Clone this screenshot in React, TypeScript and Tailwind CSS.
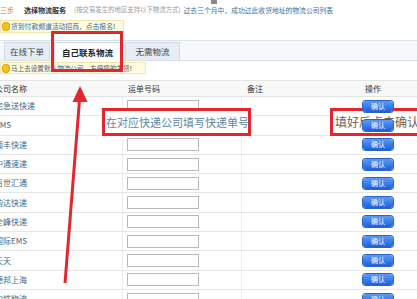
import React from "react"

const rows = [
  "宅急送快递",
  "EMS",
  "顺丰快递",
  "中通速递",
  "百世汇通",
  "韵达快递",
  "全峰快递",
  "国际EMS",
  "天天",
  "德邦上海",
  "中铁物流",
]

function Bulb() {
  return (
    <span className="mx-[2px] inline-block h-[7px] w-[6px] shrink-0 rounded-full bg-[#f4c21c] ring-1 ring-[#e3a400]" />
  )
}

function ConfirmButton() {
  return (
    <button className="relative z-20 flex h-[11px] w-[30px] items-center justify-center rounded-[3px] bg-gradient-to-b from-[#5b9bf5] to-[#1c5fd9] text-[7px] leading-none text-white shadow-[0_0_0_1px_#2a64c8]">
      确认
    </button>
  )
}

export default function App() {
  return (
    <div
      className="relative h-[299px] w-[417px] overflow-hidden bg-white"
      style={{ fontFamily: '"Noto Sans CJK SC", "Noto Sans", sans-serif' }}
    >
      {/* step title */}
      <div className="flex h-[20px] items-center whitespace-nowrap text-[7px] leading-none">
        <span className="-ml-[7px] text-[#e0782a]">第三步</span>
        <span className="ml-[10px] font-bold text-[#333]">选择物流服务</span>
        <span className="ml-[8px] text-[6.4px] text-[#9a9a9a]">(按交易发生的地区支持以下物流方式)</span>
        <span className="ml-[3px] text-[6.8px] text-[#3b6f9a]">过去三个月中，成功过此收货地址的物流公司列表</span>
      </div>
      <div className="absolute left-[211px] top-0 h-[4px] w-[6px] bg-[#8a8a8a]" />

      {/* notice 1 */}
      <div className="flex h-[13px] w-[124px] items-center whitespace-nowrap border border-[#f1e4ad] bg-[#fffbe0] text-[6.8px] leading-none">
        <Bulb />
        <span className="text-[#2f6fae]">货到付款频道活动招商，点击报名</span>
        <span className="text-[#333]">!</span>
      </div>

      {/* tabs */}
      <div className="mt-[7px] flex h-[21px] items-end gap-[4px] border-y border-[#d9e0e8] bg-[#f6f8fb] pl-[4px]">
        <div className="flex h-[18px] w-[46px] items-center justify-center border border-b-0 border-[#cfd8e3] bg-[#e7edf4] text-[8.5px] text-[#444]">
          在线下单
        </div>
        <div className="-mb-px flex h-[19px] w-[67px] items-center justify-center border border-b-0 border-[#cfd8e3] bg-white text-[8.5px] font-bold text-[#222]">
          自己联系物流
        </div>
        <div className="flex h-[18px] w-[55px] items-center justify-center border border-b-0 border-[#cfd8e3] bg-[#e7edf4] text-[8.5px] text-[#444]">
          无需物流
        </div>
      </div>

      {/* notice 2 */}
      <div className="mt-[1px] flex h-[12px] w-[146px] items-center whitespace-nowrap border border-[#f1e4ad] bg-[#fffbe0] text-[6.6px] leading-none">
        <Bulb />
        <span className="text-[#555]">马上去设置</span>
        <span className="text-[#2f6fae]">默认物流公司</span>
        <span className="text-[#555]">，方便您的发货</span>
        <span className="text-[#333]">!</span>
      </div>

      {/* table */}
      <div className="mt-[6px] grid h-[17px] grid-cols-[123px_119px_118px_57px] items-center border-y border-[#e4e4e4] bg-[#f8f8f8] text-[8px] leading-none text-[#333]">
        <span className="-ml-[5px] whitespace-nowrap">公司名称</span>
        <span className="pl-[5px]">运单号码</span>
        <span className="pl-[5px]">备注</span>
        <span className="pl-[5px]">操作</span>
      </div>
      {rows.map((name) => (
        <div
          key={name}
          className="grid h-[19.3px] grid-cols-[123px_119px_118px_57px] border-b border-[#e6e6e6] text-[8px] leading-none"
        >
          <div className="flex items-center border-r border-[#ececec]">
            <span className="-ml-[5px] whitespace-nowrap text-[#46667a]">{name}</span>
          </div>
          <div className="flex items-center border-r border-[#ececec] pl-[4px]">
            <div className="h-[13px] w-[72px] border border-[#b9b9b9] bg-white" />
          </div>
          <div />
          <div className="flex items-center pl-[3px]">
            <ConfirmButton />
          </div>
        </div>
      ))}

      {/* annotations */}
      <div className="absolute left-[51px] top-[31px] h-[41px] w-[72px] border-[3px] border-[#e3262b]" />
      <div className="absolute left-[102px] top-[108px] z-10 flex h-[28px] w-[149px] items-center whitespace-nowrap border-[3px] border-[#e3262b] bg-white pl-[1px] text-[11px] leading-none text-[#5a87a6]">
        在对应快递公司填写快递单号
      </div>
      <div className="absolute left-[330px] top-[108px] z-10 flex h-[28px] w-[95px] items-center whitespace-nowrap border-[3px] border-[#e3262b] bg-white pl-[2px] text-[12px] leading-none text-[#6d5e5a]">
        填好后点击确认
      </div>
      <svg className="absolute left-0 top-0 z-10" width="417" height="299" viewBox="0 0 417 299">
        <line x1="65" y1="283" x2="79.5" y2="100" stroke="#e3262b" strokeWidth="3" />
        <polygon points="80,86 72.5,102 87.5,102" fill="#e3262b" />
      </svg>
    </div>
  )
}
